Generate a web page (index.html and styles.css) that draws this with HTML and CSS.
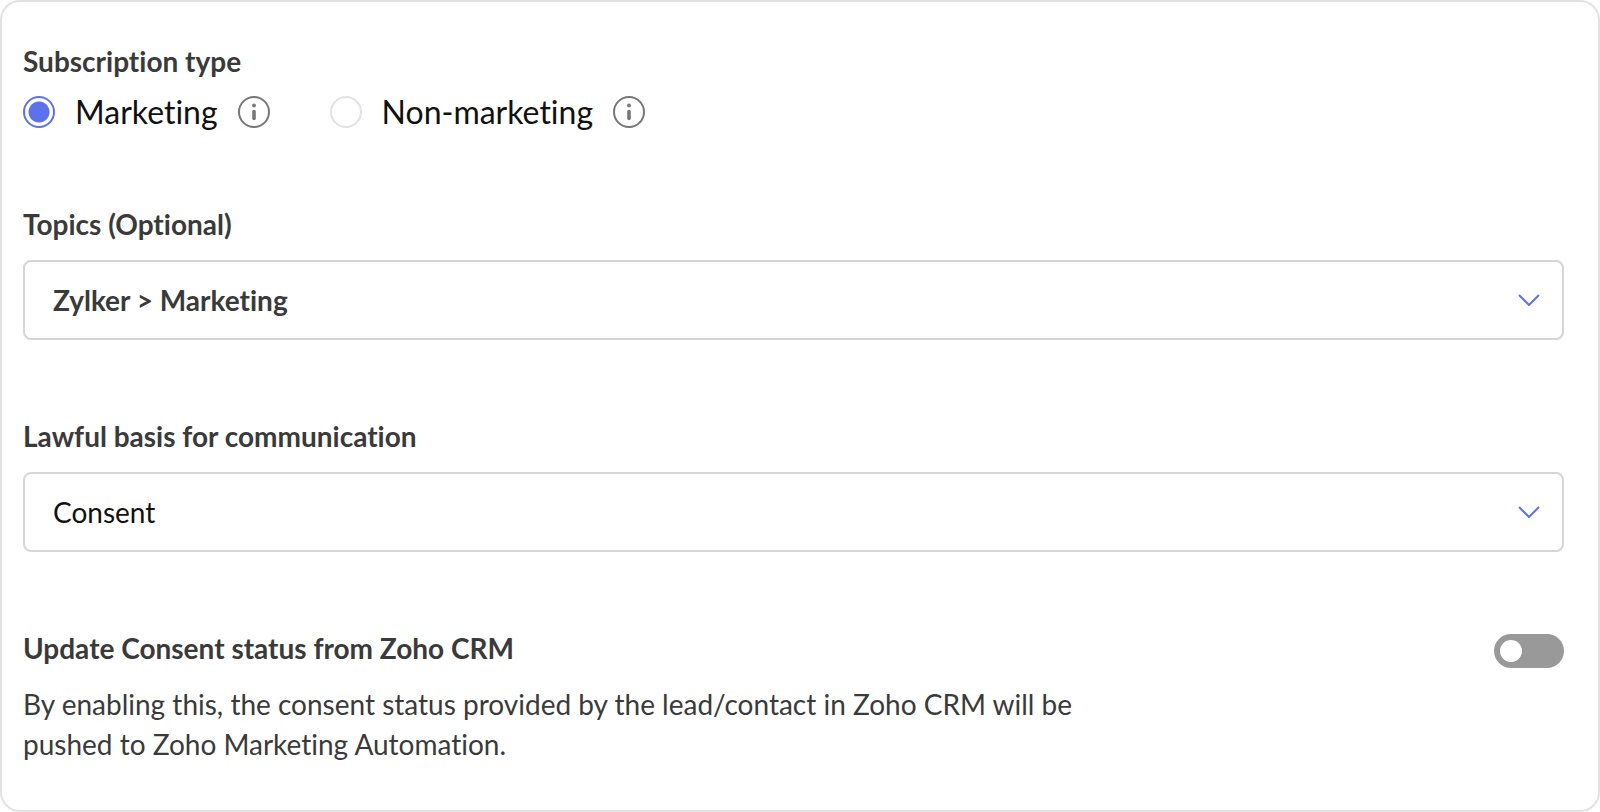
FILE: index.html
```html
<!DOCTYPE html>
<html lang="en">
<head>
  <meta charset="UTF-8" />
  <meta name="viewport" content="width=device-width, initial-scale=1" />
  <title>Subscription settings</title>
  <link rel="stylesheet" href="styles.css">
</head>
<body>
  <form class="card">
    <!-- Subscription type -->
    <fieldset class="types">
      <legend class="heading">Subscription type</legend>
      <div class="options">
        <div class="option">
          <input class="radio" type="radio" name="type" id="marketing" checked />
          <label for="marketing">Marketing</label>
          <button class="info" type="button" aria-label="About marketing">
            <svg viewBox="0 0 32 32" width="32" height="32">
              <circle cx="16" cy="16" r="15" fill="none" stroke="#777" stroke-width="2" />
              <circle cx="16" cy="9.5" r="1.9" fill="#777" />
              <path d="M16 15.5v7" stroke="#777" stroke-width="3.6" stroke-linecap="round" />
            </svg>
          </button>
        </div>
        <div class="option">
          <input class="radio" type="radio" name="type" id="nonMarketing" />
          <label for="nonMarketing">Non-marketing</label>
          <button class="info" type="button" aria-label="About non-marketing">
            <svg viewBox="0 0 32 32" width="32" height="32">
              <circle cx="16" cy="16" r="15" fill="none" stroke="#777" stroke-width="2" />
              <circle cx="16" cy="9.5" r="1.9" fill="#777" />
              <path d="M16 15.5v7" stroke="#777" stroke-width="3.6" stroke-linecap="round" />
            </svg>
          </button>
        </div>
      </div>
    </fieldset>

    <!-- Topics -->
    <div class="field">
      <label class="heading" for="topics">Topics (Optional)</label>
      <div class="select">
        <select class="bold" id="topics">
          <option>Zylker &gt; Marketing</option>
        </select>
        <svg class="arrow" viewBox="0 0 22 12" width="22" height="12">
          <path d="M1 1l10 10 10-10" fill="none" stroke="#5c72ea" stroke-width="2" />
        </svg>
      </div>
    </div>

    <!-- Lawful basis -->
    <div class="field">
      <label class="heading" for="basis">Lawful basis for communication</label>
      <div class="select">
        <select id="basis">
          <option>Consent</option>
        </select>
        <svg class="arrow" viewBox="0 0 22 12" width="22" height="12">
          <path d="M1 1l10 10 10-10" fill="none" stroke="#5c72ea" stroke-width="2" />
        </svg>
      </div>
    </div>

    <!-- CRM sync -->
    <div class="sync">
      <div class="sync-text">
        <label class="heading" for="sync">Update Consent status from Zoho CRM</label>
        <p>By enabling this, the consent status provided by the lead/contact in Zoho CRM will be pushed to Zoho Marketing Automation.</p>
      </div>
      <input class="toggle" type="checkbox" role="switch" id="sync" />
    </div>
  </form>
</body>
</html>
```
FILE: styles.css
```css
* {
  box-sizing: border-box;
}
body {
  margin: 0;
  background: white;
  color: #3a3a3a;
  font-family: Lato, sans-serif;
  font-size: 28px;
  line-height: 40px;
  font-variant-ligatures: none;
}
.card {
  min-height: 100vh;
  padding: 39px 34px 39px 21px;
  border: 2px solid #e2e2e2;
  border-radius: 20px;
  display: flex;
  flex-direction: column;
  gap: 76px;
}
.heading {
  display: block;
  padding: 0;
  font-weight: bold;
}
.types {
  margin: 0;
  padding: 0;
  border: none;
}
.options {
  display: flex;
  flex-wrap: wrap;
  gap: 60px;
  padding-top: 15px;
  color: #111;
  font-size: 32px;
  line-height: 32px;
}
.option {
  display: flex;
  align-items: center;
  gap: 20px;
}
.radio {
  appearance: none;
  width: 32px;
  height: 32px;
  margin: 0;
  border: 2px solid #e2e2e2;
  border-radius: 50%;
}
.radio:checked {
  border-color: #5c72ea;
  background: radial-gradient(circle, #5c72ea 10px, white 11px);
}
.info {
  padding: 0;
  border: none;
  background: none;
  cursor: pointer;
}
.info svg {
  display: block;
}
.field {
  display: flex;
  flex-direction: column;
  gap: 16px;
}
.select {
  display: grid;
  align-items: center;
}
.select select,
.arrow {
  grid-area: 1 / 1;
}
.select select {
  appearance: none;
  width: 100%;
  height: 80px;
  padding: 0 60px 0 28px;
  border: 2px solid #d6d6d6;
  border-radius: 8px;
  background: white;
  color: #111;
  font: inherit;
  font-variant-ligatures: none;
}
.select .bold {
  color: #3a3a3a;
  font-weight: bold;
}
.arrow {
  justify-self: end;
  margin-right: 24px;
  pointer-events: none;
}
.sync {
  display: flex;
  justify-content: space-between;
  align-items: flex-start;
  gap: 40px;
}
.sync-text {
  max-width: 1060px;
}
.sync p {
  margin: 16px 0 0;
}
.toggle {
  appearance: none;
  flex: none;
  width: 70px;
  height: 34px;
  margin: 6px 0 0;
  padding: 6px;
  border-radius: 17px;
  background: #999;
  cursor: pointer;
}
.toggle::before {
  content: "";
  display: block;
  width: 22px;
  height: 22px;
  border-radius: 50%;
  background: white;
}
.toggle:checked {
  background: #5c72ea;
}
.toggle:checked::before {
  margin-left: auto;
}
```
